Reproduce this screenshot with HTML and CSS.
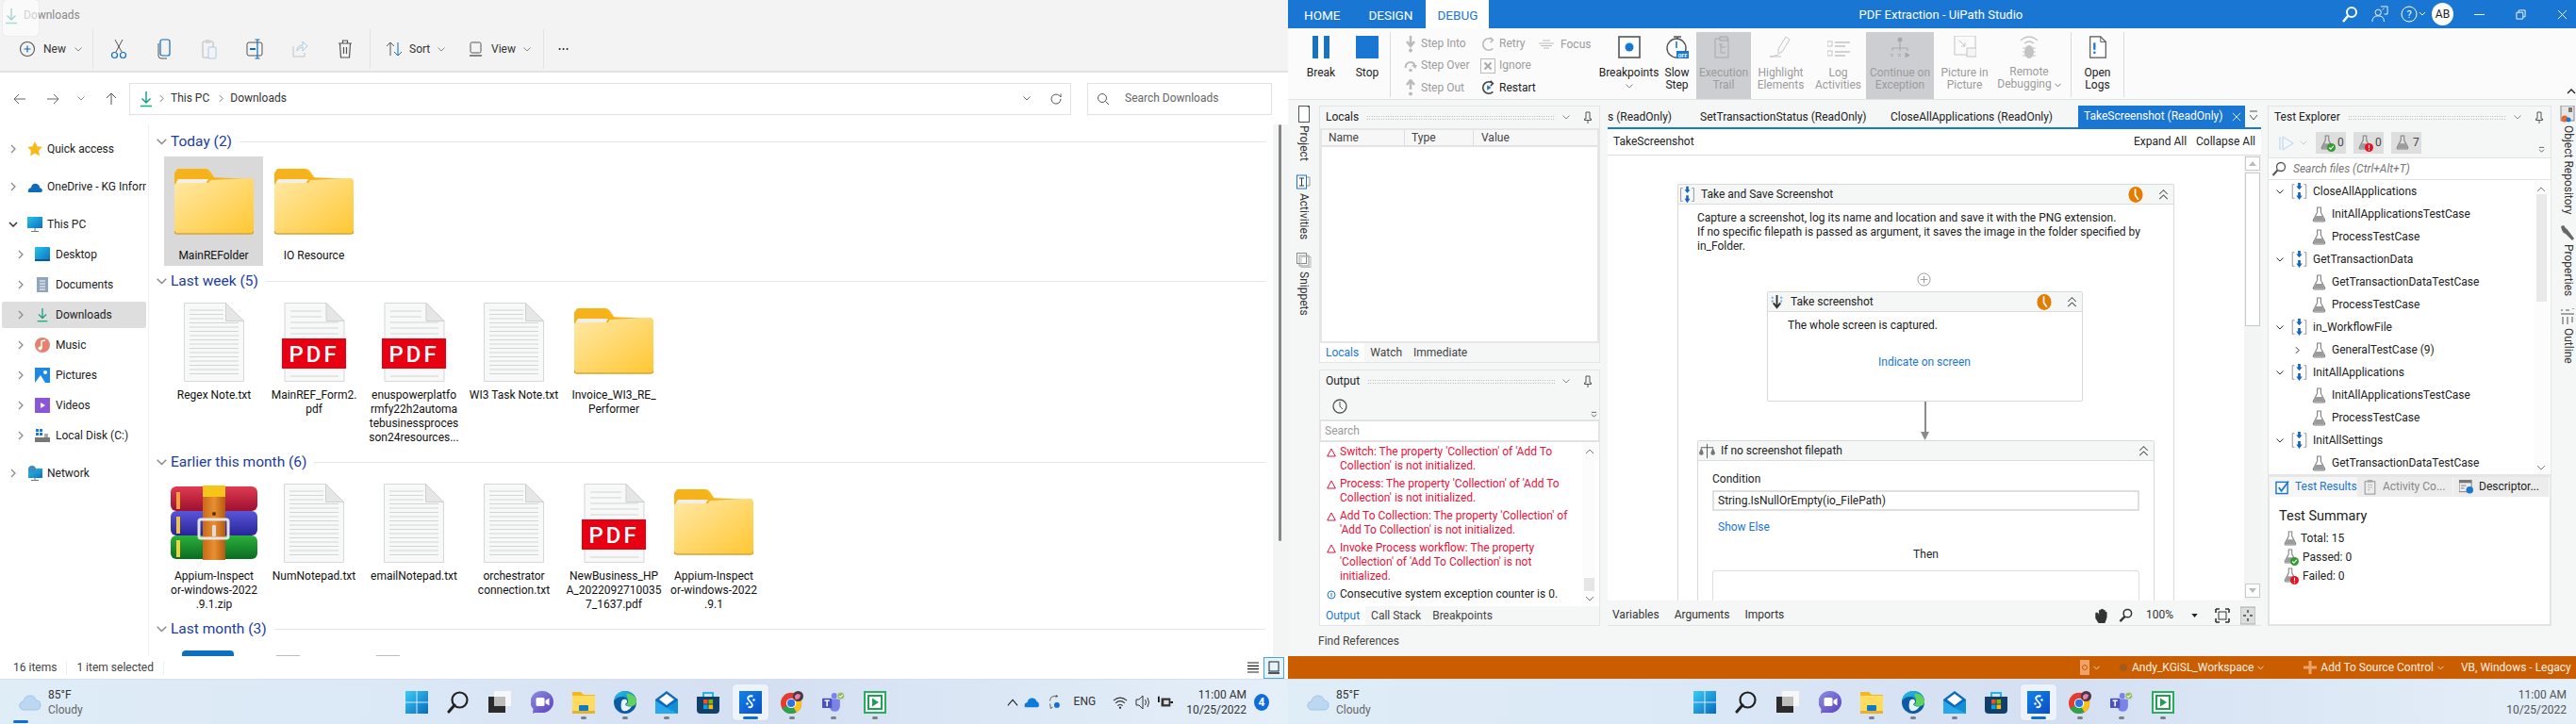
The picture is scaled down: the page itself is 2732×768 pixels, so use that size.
FILE: index.html
```
<!DOCTYPE html>
<html lang="en">
<head>
<meta charset="utf-8">
<title>Downloads and UiPath Studio</title>
<link rel="stylesheet" href="styles.css">
</head>
<body>
<svg class="defs" aria-hidden="true">
<defs>
<linearGradient id="gf" x1="0" y1="0" x2="1" y2="1"><stop offset="0" stop-color="#ffe9a8"/><stop offset="1" stop-color="#ffc733"/></linearGradient>
<linearGradient id="gs" x1="0" y1="0" x2="1" y2="1"><stop offset="0" stop-color="#3ccdf5"/><stop offset="1" stop-color="#0669bc"/></linearGradient>
<linearGradient id="gd" x1="0" y1="0" x2="1" y2="1"><stop offset="0" stop-color="#28c4e8"/><stop offset="1" stop-color="#0a6fc0"/></linearGradient>
<linearGradient id="gu" x1="0" y1="0" x2="1" y2="1"><stop offset="0" stop-color="#1184ea"/><stop offset="1" stop-color="#0a4fc4"/></linearGradient>
<linearGradient id="gc" x1="0" y1="0" x2="1" y2="1"><stop offset="0" stop-color="#8b8fe0"/><stop offset="1" stop-color="#5b3fc0"/></linearGradient>
<linearGradient id="gb" x1="0" y1="0" x2="0" y2="1"><stop offset="0" stop-color="#e23b52"/><stop offset="1" stop-color="#9c1030"/></linearGradient>
<linearGradient id="gv" x1="0" y1="0" x2="0" y2="1"><stop offset="0" stop-color="#5a56d8"/><stop offset="1" stop-color="#27249a"/></linearGradient>
<linearGradient id="gg" x1="0" y1="0" x2="0" y2="1"><stop offset="0" stop-color="#2cb03c"/><stop offset="1" stop-color="#0a6c22"/></linearGradient>
<linearGradient id="go" x1="0" y1="0" x2="1" y2="0"><stop offset="0" stop-color="#c9681a"/><stop offset=".5" stop-color="#e89030"/><stop offset="1" stop-color="#b45a12"/></linearGradient>
</defs>
<symbol id="r-pause" viewBox="0 0 24 24"><rect x="3" width="6" height="24" fill="#1a73bd"/><rect x="15" width="6" height="24" fill="#1a73bd"/></symbol>
<symbol id="dl" viewBox="0 0 14 18"><path d="M7 1v12M2.500 8.500 7 13l4.500-4.500" fill="none" stroke="#1f9e8a" stroke-width="1.500"/><path d="M1 16.500h12" stroke="#18b87c" stroke-width="1.600"/></symbol>
<symbol id="folder" viewBox="0 0 84 84"><path d="M2 8q0-2 2-2h29q3 0 5 3l6 9h-42z" fill="#fbb614"/><path d="M0 12q0-4 4-5h28l5 8 45 2v54q0 3-3 3H4q-4 0-4-3z" fill="#f6b21a"/><path d="M2 20l2-3h32l-3 5H2z" fill="#f3efe6"/><path d="M36 21l2-3 42-2q4 0 4 4v52q0 3-3 3H3q-3 0-3-3V24q0-3 3-3z" fill="url(#gf)"/><path d="M0 72q0 3 3 3h78q3 0 3-3" fill="none" stroke="#d9a23a" stroke-width="1.500"/></symbol>
<symbol id="txt" viewBox="0 0 64 84"><path d="M.5.500h44l19 19v64H.5z" fill="#f7f8f8" stroke="#d7d7d7"/><path d="M44.500.500v19h19z" fill="#e6e6e6" stroke="#d0d0d0"/><path d="M6 8h36M6 12.500h36M6 17h36M6 21.500h52M6 26h52M6 30.500h52M6 35h52M6 39.500h52M6 44h52M6 48.500h52M6 53h52M6 57.500h52M6 62h52M6 66.500h52M6 71h52M6 75.500h52" stroke="#d4d4d4"/></symbol>
<symbol id="pdf" viewBox="0 0 68 84"><path d="M3 .500h44l19 19v64H3z" fill="#f7f8f8" stroke="#d7d7d7"/><path d="M47 .500v19h19z" fill="#e6e6e6" stroke="#d0d0d0"/><path d="M9 9h33M9 15h33M9 21h51M9 27h51M9 33h51M9 78h51" stroke="#d4d4d4"/><rect y="38" width="68" height="32" fill="#e60012"/></symbol>
<symbol id="zip" viewBox="0 0 92 80"><rect y="1" width="92" height="26" rx="6" fill="url(#gb)"/><rect y="27" width="92" height="26" rx="6" fill="url(#gv)"/><rect y="53" width="92" height="25" rx="6" fill="url(#gg)"/><rect x="6" y="7" width="4" height="18" fill="#f2a33a"/><rect x="6" y="33" width="4" height="18" fill="#f2c33a"/><rect x="6" y="58" width="4" height="18" fill="#f2d23a"/><rect x="34" y="0" width="24" height="79" fill="url(#go)"/><rect x="34" y="0" width="24" height="12" fill="#f5c51a"/><rect x="30" y="36" width="31" height="20" rx="2" fill="none" stroke="#e4e4e4" stroke-width="3"/><rect x="44" y="42" width="4" height="12" rx="1" fill="#ddd"/><circle cx="46" cy="30" r="2" fill="#5b3210"/></symbol>
<symbol id="flask" viewBox="0 0 16 18"><path d="M5.500 1h5M6 1v5.500L1.500 15q-.5 2 1.500 2h10q2 0 1.500-2L10 6.500V1" fill="none" stroke="#808080" stroke-width="1.200"/><path d="M4.500 10.500h7l3 6H1.500z" fill="#9b9b9b"/></symbol>
<symbol id="flow" viewBox="0 0 18 22"><path d="M3.500 3H1v16h2.500M14.500 3H17v16h-2.500" fill="none" stroke="#8a8a8a"/><path d="M7.500 1h3v4h2L9 9 5.500 5h2zM7.500 12h3v4h2L9 21l-3.500-5h2z" fill="#1565c0"/></symbol>
<symbol id="chev" viewBox="0 0 8 5"><path d="M.5.500 4 4 7.500.500" fill="none" stroke="currentColor"/></symbol>
<symbol id="chevr" viewBox="0 0 6 10"><path d="M1 1l4 4-4 4" fill="none" stroke="currentColor" stroke-width="1.200"/></symbol>
<symbol id="pin" viewBox="0 0 10 14"><path d="M3 1h4v7h1.500v1.500h-7V8H3zM5 9.500V13" fill="none" stroke="#555"/></symbol>
<symbol id="clockb" viewBox="0 0 16 18"><ellipse cx="8" cy="9" rx="8" ry="9" fill="#e57c00"/><path d="M7.500 2.500v7l3.500 5" fill="none" stroke="#fff" stroke-width="1.800"/></symbol>
<symbol id="coll" viewBox="0 0 12 14"><path d="M1 7l5-5 5 5M1 13l5-5 5 5" fill="none" stroke="#555" stroke-width="1.200"/></symbol>
<symbol id="warn" viewBox="0 0 10 10"><path d="M5 1 9.300 9H.7z" fill="none" stroke="#e8113a"/></symbol>
<symbol id="ok" viewBox="0 0 8 8"><circle cx="4" cy="4" r="4" fill="#2f9e2f"/><path d="M2 4l1.500 1.500L6 2.500" fill="none" stroke="#fff"/></symbol>
<symbol id="err" viewBox="0 0 8 8"><circle cx="4" cy="4" r="4" fill="#e81123"/><path d="M4 1.500v3.200M4 5.500v1.200" stroke="#fff"/></symbol>
<symbol id="t-start" viewBox="0 0 24 24"><path d="M0 0h11.500v11.500H0zM12.500 0H24v11.500H12.500zM0 12.500h11.500V24H0zM12.500 12.500H24V24H12.500z" fill="url(#gs)"/></symbol>
<symbol id="t-search" viewBox="0 0 24 24"><circle cx="13.500" cy="9.500" r="8" fill="none" stroke="#222" stroke-width="2.200"/><path d="M8 15 2 22" stroke="#222" stroke-width="3" stroke-linecap="round"/></symbol>
<symbol id="t-task" viewBox="0 0 24 24"><rect x="0" y="6" width="18" height="17" fill="#2b2b2b"/><rect x="6" y="0" width="18" height="16" fill="#f7f7f7"/><rect x="6" y="6" width="12" height="10" fill="#bdbdbd"/></symbol>
<symbol id="t-chat" viewBox="0 0 24 24"><path d="M12 0a12 11.500 0 0 1 0 23H4l-2 1 .5-5A12 11.500 0 0 1 12 0z" fill="url(#gc)"/><rect x="5.500" y="7" width="9" height="9" rx="1.500" fill="#fff"/><path d="M15.500 10l4-2.500v8l-4-2.500z" fill="#fff"/></symbol>
<symbol id="t-files" viewBox="0 0 24 24"><path d="M0 1h9l3 3h12v20H0z" fill="#f5b81c"/><path d="M0 5h24v19H0z" fill="#ffdc5e"/><rect x="7" y="15" width="10" height="6" rx="1" fill="#0f7bc4"/><rect y="21" width="24" height="3" fill="#e8b030"/></symbol>
<symbol id="t-edge" viewBox="0 0 24 24"><circle cx="12" cy="12" r="12" fill="#0c59a4"/><path d="M0 11C1 3 7 0 12 0c7 0 12 5 12 11 0 3-2 5-6 5-3 0-5-1-5-2 1 0 2-1 2-3 0-3-3-5-6-5-5 0-8 3-9 5z" fill="url(#gd)"/><path d="M13 3c6-1 11 3 11 8 0 3-2 5-6 5-3 0-5-1-5-2 1 0 2-1 2-3 0-3-1-6-2-8z" fill="#5fd35b"/><path d="M8 12c0-3 3-4 5-3 2 2 1 4-1 5 1 2 4 3 7 2-2 4-6 6-9 5-2-1-3-4-2-9z" fill="#eaf3fb"/></symbol>
<symbol id="t-mail" viewBox="0 0 24 24"><path d="M0 9 12 0l12 9v15H0z" fill="#0d6ab8"/><path d="M4 9 12 3l8 6-8 6z" fill="#fff"/><path d="M0 10l12 8 12-8v14H0z" fill="#28a8ea"/><path d="M12 18l12-8v14z" fill="#0f8fd8"/></symbol>
<symbol id="t-store" viewBox="0 0 24 24"><path d="M7 6V2h10v4" fill="none" stroke="#20b6e8" stroke-width="2"/><path d="M0 6h24v14q0 4-4 4H4q-4 0-4-4z" fill="#103f6c"/><rect x="7" y="9" width="4.600" height="4.600" fill="#f25022"/><rect x="12.500" y="9" width="4.600" height="4.600" fill="#7fba00"/><rect x="7" y="14.500" width="4.600" height="4.600" fill="#00a4ef"/><rect x="12.500" y="14.500" width="4.600" height="4.600" fill="#ffb900"/></symbol>
<symbol id="t-ui" viewBox="0 0 24 24"><rect width="24" height="24" fill="url(#gu)"/><path d="M14.500 5.500C10 4.500 8 7 10 9.500l3 3.500c2 2.500 0 5-3.500 4" fill="none" stroke="#fff" stroke-width="1.800"/><circle cx="15.500" cy="9.500" r="1.200" fill="#fff"/><circle cx="8.500" cy="13.500" r="1.200" fill="#fff"/></symbol>
<symbol id="t-chrome" viewBox="0 0 26 26"><circle cx="12" cy="14" r="12" fill="#e23d2e"/><path d="M12 14 1.600 20A12 12 0 0 0 12 26c2 0 4-.5 6-1.600z" fill="#2ba24c"/><path d="M12 14 22.400 8A12 12 0 0 1 18 24.400z" fill="#fbc116"/><circle cx="12" cy="14" r="5.600" fill="#fff"/><circle cx="12" cy="14" r="4.400" fill="#2f72e6"/><circle cx="20" cy="6" r="6" fill="#4b3646"/><path d="M16 6q3-5 7-1l-2 4-4 1z" fill="#e882a8"/></symbol>
<symbol id="t-teams" viewBox="0 0 28 26"><circle cx="15" cy="5" r="3.600" fill="#7b83eb"/><path d="M9 9h13v9a6 6 0 0 1-13 0z" fill="#7b83eb"/><rect x="0" y="8" width="12" height="12" rx="1" fill="#4b53bc"/><path d="M3 11h6M6 11v7" stroke="#fff" stroke-width="1.800"/><circle cx="23" cy="5" r="4.500" fill="#8fbc5a" stroke="#ddd"/><path d="M20.800 5l1.700 1.700 2.800-3" fill="none" stroke="#fff" stroke-width="1.200"/></symbol>
<symbol id="t-green" viewBox="0 0 24 24"><rect x="1" y="1" width="22" height="22" fill="#fff" stroke="#25b05c" stroke-width="2"/><rect x="4" y="4" width="16" height="16" fill="#1f9f55"/><rect x="6" y="6" width="12" height="12" fill="#fff"/><path d="M9 7.500 16 12l-7 4.500z" fill="#1f9f55"/></symbol>
</svg>

<section class="screen">
<div class="explorer">
  <div class="ex-title"><svg class="ic14"><use href="#dl"/></svg><span>Downloads</span></div>
  <div class="ex-tools">
    <div class="tool tool-new"><svg class="ic18" viewBox="0 0 18 18"><circle cx="9" cy="9" r="7.500" fill="none" stroke="#555" stroke-width="1.100"/><path d="M9 5.500v7M5.500 9h7" stroke="#0f6cbd" stroke-width="1.200"/></svg><span>New</span><svg class="ch8"><use href="#chev"/></svg></div>
    <i class="tsep s-a"></i>
    <div class="tool"><svg class="ic18" viewBox="0 0 18 22"><path d="M5 1l7 13M13 1 6 14" stroke="#555" fill="none"/><circle cx="4.500" cy="17.500" r="3" fill="none" stroke="#0f6cbd" stroke-width="1.200"/><circle cx="13.500" cy="17.500" r="3" fill="none" stroke="#0f6cbd" stroke-width="1.200"/></svg></div>
    <div class="tool"><svg class="ic18" viewBox="0 0 18 22"><rect x="5" y="1" width="10" height="17" rx="2" fill="none" stroke="#0f6cbd" stroke-width="1.200"/><path d="M3 5v13q0 3 3 3h6" fill="none" stroke="#555"/></svg></div>
    <div class="tool dim"><svg class="ic18" viewBox="0 0 18 22"><rect x="2" y="3" width="11" height="17" rx="1" fill="none" stroke="#b8b8b8"/><rect x="5" y="1" width="5" height="4" fill="#d5d5d5"/><rect x="8" y="9" width="8" height="12" rx="1" fill="#f3f3f3" stroke="#a9cbe6"/></svg></div>
    <div class="tool"><svg class="ic18" viewBox="0 0 18 22"><rect x="1" y="4" width="16" height="14" rx="2" fill="none" stroke="#555"/><path d="M12 1v20M9.500 1h5M9.500 21h5" stroke="#0f6cbd" stroke-width="1.200" fill="none"/><path d="M4 11h6" stroke="#0f6cbd" stroke-width="2"/></svg></div>
    <div class="tool dim"><svg class="ic18" viewBox="0 0 18 22"><path d="M2 8v11h12v-4" fill="none" stroke="#c4c4c4"/><path d="M6 13q0-6 6-6V3l5 5-5 5V9q-4 0-6 4z" fill="none" stroke="#a9cbe6"/></svg></div>
    <div class="tool"><svg class="ic18" viewBox="0 0 18 22"><path d="M2 5h14M6.500 5V2h5v3M3.500 5l1 15h9l1-15M7.500 9v7M10.500 9v7" fill="none" stroke="#555" stroke-width="1.200"/></svg></div>
    <i class="tsep s-b"></i>
    <div class="tool tool-txt"><svg class="ic18" viewBox="0 0 18 18"><path d="M5 16V2M1 6l4-4 4 4" fill="none" stroke="#555"/><path d="M13 2v14M9 12l4 4 4-4" fill="none" stroke="#0f6cbd"/></svg><span>Sort</span><svg class="ch8"><use href="#chev"/></svg></div>
    <div class="tool tool-view"><svg class="ic18" viewBox="0 0 18 18"><rect x="3" y="2" width="11" height="11" rx="1.500" fill="none" stroke="#555"/><path d="M2 16h13" stroke="#555" stroke-width="1.400"/></svg><span>View</span><svg class="ch8"><use href="#chev"/></svg></div>
    <i class="tsep"></i>
    <div class="tool-dots">•••</div>
  </div>
  <div class="ex-addr">
    <div class="navs">
      <svg class="ic14" viewBox="0 0 14 14"><path d="M13 7H1M6 2 1 7l5 5" fill="none" stroke="#666"/></svg>
      <svg class="ic14" viewBox="0 0 14 14"><path d="M1 7h12M8 2l5 5-5 5" fill="none" stroke="#666"/></svg>
      <svg class="ch8"><use href="#chev"/></svg>
      <svg class="ic14" viewBox="0 0 14 14"><path d="M7 13V1M2 6l5-5 5 5" fill="none" stroke="#555"/></svg>
    </div>
    <div class="crumbs"><svg class="ic14"><use href="#dl"/></svg><svg class="cr"><use href="#chevr"/></svg><span>This PC</span><svg class="cr"><use href="#chevr"/></svg><span>Downloads</span>
      <svg class="cr-ch"><use href="#chev"/></svg><svg class="cr-re" viewBox="0 0 14 14"><path d="M12 7a5 5 0 1 1-1.500-3.500L12 5V1.500" fill="none" stroke="#555"/></svg></div>
    <div class="exsearch"><svg class="ic14" viewBox="0 0 14 14"><circle cx="6" cy="6" r="4.500" fill="none" stroke="#555"/><path d="M9.500 9.500 13 13" stroke="#555"/></svg><span>Search Downloads</span></div>
  </div>
  <div class="ex-main">
    <nav class="nav">
      <div class="nrow"><svg class="nch"><use href="#chevr"/></svg><svg class="nic" viewBox="0 0 16 16"><path d="M8 0l2.400 5.300 5.600.6-4.200 3.800 1.200 5.800L8 12.600l-5 2.900 1.200-5.800L0 5.900l5.600-.6z" fill="#fdb813"/></svg><span>Quick access</span></div>
      <div class="nrow gap"><svg class="nch"><use href="#chevr"/></svg><svg class="nic" viewBox="0 0 16 16"><path d="M1 14q-1-4 3-5 1-5 6-4 3 1 3 4 3 1 3 3t-2 2z" fill="#0f6cbd"/></svg><span class="clip">OneDrive - KG Inform</span></div>
      <div class="nrow gap"><svg class="nch down" viewBox="0 0 10 6"><path d="M1 1l4 4 4-4" fill="none" stroke="#333" stroke-width="1.500"/></svg><svg class="nic" viewBox="0 0 16 16"><rect width="16" height="12" fill="url(#gd)"/><path d="M8 12v3M4 15.500h8" stroke="#777"/></svg><span>This PC</span></div>
      <div class="nrow sub"><svg class="nch"><use href="#chevr"/></svg><svg class="nic" viewBox="0 0 16 16"><rect width="16" height="15" rx="1" fill="url(#gd)"/><rect y="13" width="16" height="2" fill="#085a9c"/></svg><span>Desktop</span></div>
      <div class="nrow sub"><svg class="nch"><use href="#chevr"/></svg><svg class="nic" viewBox="0 0 16 16"><rect x="2" width="12" height="16" fill="#8fa5be"/><path d="M5 4h6M5 7h6M5 10h6M5 13h6" stroke="#fff"/></svg><span>Documents</span></div>
      <div class="nrow sub cur"><svg class="nch"><use href="#chevr"/></svg><svg class="nic"><use href="#dl"/></svg><span>Downloads</span></div>
      <div class="nrow sub"><svg class="nch"><use href="#chevr"/></svg><svg class="nic" viewBox="0 0 16 16"><circle cx="8" cy="8" r="8" fill="#e5826f"/><path d="M7 11V4l4-1" fill="none" stroke="#fff" stroke-width="1.500"/><circle cx="5.500" cy="11.500" r="2" fill="#fff"/></svg><span>Music</span></div>
      <div class="nrow sub"><svg class="nch"><use href="#chevr"/></svg><svg class="nic" viewBox="0 0 16 16"><rect width="16" height="16" fill="#1e88e5"/><path d="M0 16 6 8l5 8z" fill="#fff"/><circle cx="11" cy="5" r="2" fill="#fff"/></svg><span>Pictures</span></div>
      <div class="nrow sub"><svg class="nch"><use href="#chevr"/></svg><svg class="nic" viewBox="0 0 16 16"><rect width="16" height="16" fill="#8a55d6"/><path d="M6 5l5 3-5 3z" fill="#fff"/></svg><span>Videos</span></div>
      <div class="nrow sub"><svg class="nch"><use href="#chevr"/></svg><svg class="nic" viewBox="0 0 16 16"><path d="M1 1h3v3H1zM5 1h3v3H5zM1 5h3v3H1zM5 5h3v3H5z" fill="#1e78d8"/><rect y="10" width="16" height="5" fill="#777"/><path d="M10 6h4v4h-4z" fill="#aaa"/></svg><span>Local Disk (C:)</span></div>
      <div class="nrow gap"><svg class="nch"><use href="#chevr"/></svg><svg class="nic" viewBox="0 0 16 16"><rect x="1" y="3" width="15" height="10" fill="url(#gd)"/><circle cx="5" cy="4" r="4" fill="#3a8fc0"/><path d="M8 13v3M4 15.500h8" stroke="#777"/></svg><span>Network</span></div>
    </nav>
    <main class="files">
      <div class="group first">
        <h2 class="ghead"><svg class="gch"><use href="#chev"/></svg><span>Today (2)</span><i></i></h2>
        <div class="tiles">
          <div class="tile sel"><svg class="ticon"><use href="#folder"/></svg><p>MainREFolder</p></div>
          <div class="tile"><svg class="ticon"><use href="#folder"/></svg><p>IO Resource</p></div>
        </div>
      </div>
      <div class="group">
        <h2 class="ghead"><svg class="gch"><use href="#chev"/></svg><span>Last week (5)</span><i></i></h2>
        <div class="tiles">
          <div class="tile"><svg class="ticon"><use href="#txt"/></svg><p>Regex Note.txt</p></div>
          <div class="tile"><svg class="ticon" viewBox="0 0 68 84"><use href="#pdf"/><text x="34" y="63" text-anchor="middle" class="pdft">PDF</text></svg><p>MainREF_Form2.<br>pdf</p></div>
          <div class="tile"><svg class="ticon" viewBox="0 0 68 84"><use href="#pdf"/><text x="34" y="63" text-anchor="middle" class="pdft">PDF</text></svg><p>enuspowerplatfo<br>rmfy22h2automa<br>tebusinessproces<br>son24resources...</p></div>
          <div class="tile"><svg class="ticon"><use href="#txt"/></svg><p>WI3 Task Note.txt</p></div>
          <div class="tile"><svg class="ticon"><use href="#folder"/></svg><p>Invoice_WI3_RE_<br>Performer</p></div>
        </div>
      </div>
      <div class="group">
        <h2 class="ghead"><svg class="gch"><use href="#chev"/></svg><span>Earlier this month (6)</span><i></i></h2>
        <div class="tiles">
          <div class="tile"><svg class="ticon wide"><use href="#zip"/></svg><p>Appium-Inspect<br>or-windows-2022<br>.9.1.zip</p></div>
          <div class="tile"><svg class="ticon"><use href="#txt"/></svg><p>NumNotepad.txt</p></div>
          <div class="tile"><svg class="ticon"><use href="#txt"/></svg><p>emailNotepad.txt</p></div>
          <div class="tile"><svg class="ticon"><use href="#txt"/></svg><p>orchestrator<br>connection.txt</p></div>
          <div class="tile"><svg class="ticon" viewBox="0 0 68 84"><use href="#pdf"/><text x="34" y="63" text-anchor="middle" class="pdft">PDF</text></svg><p>NewBusiness_HP<br>A_2022092710035<br>7_1637.pdf</p></div>
          <div class="tile"><svg class="ticon"><use href="#folder"/></svg><p>Appium-Inspect<br>or-windows-2022<br>.9.1</p></div>
        </div>
      </div>
      <div class="group">
        <h2 class="ghead"><svg class="gch"><use href="#chev"/></svg><span>Last month (3)</span><i></i></h2>
        <div class="peek"><b class="pk-blue"></b><b class="pk-line"></b><b class="pk-line"></b></div>
      </div>
    </main>
    <div class="ex-scroll"><i></i></div>
  </div>
  <div class="ex-status"><span>16 items</span><i></i><span>1 item selected</span><i></i>
    <div class="viewbtns"><svg class="vb" viewBox="0 0 14 14"><path d="M1 2h12M1 5.300h12M1 8.700h12M1 12h12" stroke="#222" stroke-width="1.200"/></svg><span class="vb-on"><svg class="vb" viewBox="0 0 14 14"><rect x="2" y="1" width="10" height="10" fill="none" stroke="#222"/><path d="M1 13h12" stroke="#222" stroke-width="1.500"/></svg></span></div>
  </div>
</div>
<footer class="taskbar">
  <div class="weather"><svg class="wcloud" viewBox="0 0 24 18"><path d="M5 17q-5-1-4-6 1-3 4-3 1-6 7-6 5 0 6 5 5 0 5 5t-5 5z" fill="#bcd7f2" stroke="#a3c4ea"/></svg><div><div>85°F</div><div class="wsub">Cloudy</div></div></div>
  <div class="apps">
    <span class="app"><svg class="ai"><use href="#t-start"/></svg></span>
    <span class="app"><svg class="ai"><use href="#t-search"/></svg></span>
    <span class="app"><svg class="ai"><use href="#t-task"/></svg></span>
    <span class="app"><svg class="ai"><use href="#t-chat"/></svg></span>
    <span class="app run"><svg class="ai"><use href="#t-files"/></svg></span>
    <span class="app run"><svg class="ai"><use href="#t-edge"/></svg></span>
    <span class="app run"><svg class="ai"><use href="#t-mail"/></svg></span>
    <span class="app"><svg class="ai"><use href="#t-store"/></svg></span>
    <span class="app active"><svg class="ai"><use href="#t-ui"/></svg></span>
    <span class="app run"><svg class="ai"><use href="#t-chrome"/></svg></span>
    <span class="app run"><svg class="ai"><use href="#t-teams"/></svg></span>
    <span class="app run"><svg class="ai"><use href="#t-green"/></svg></span>
  </div>
  <div class="tray">
    <svg class="tr tr-up" viewBox="0 0 14 10"><path d="M1 9l6-7 6 7" fill="none" stroke="#222" stroke-width="1.300"/></svg>
    <svg class="tr" viewBox="0 0 18 14"><path d="M1 13q-1.500-5 3-6 1-5 6-5 4 0 5 4 3 1 3 4t-3 3z" fill="#0f7bd8"/></svg>
    <svg class="tr" viewBox="0 0 18 22"><path d="M3 9Q3 2 10 2h4M11 0l3 2-3 2M3 13l1 7 3-2" fill="none" stroke="#333"/><circle cx="13" cy="15" r="4" fill="#0f6cd8"/></svg>
    <span class="eng">ENG</span>
    <svg class="tr" viewBox="0 0 18 16"><path d="M1 6q8-7 16 0M3.500 9q5.500-5 11 0M6 12q3-2.500 6 0" fill="none" stroke="#333" stroke-width="1.200"/><circle cx="9" cy="14.500" r="1.300" fill="#333"/></svg>
    <svg class="tr" viewBox="0 0 16 16"><path d="M1 5h3l4-4v14l-4-4H1z" fill="none" stroke="#333"/><path d="M10.500 5q2 3 0 6M13 3q3 5 0 10" fill="none" stroke="#333"/></svg>
    <svg class="tr" viewBox="0 0 18 16"><rect x="4" y="3" width="11" height="10" fill="#333"/><rect x="7" y="5.500" width="6" height="5" fill="#ddd"/><path d="M1 1v7M15 8h3" stroke="#111" stroke-width="2"/></svg>
    <div class="clock"><div>11:00 AM</div><div>10/25/2022</div></div>
    <span class="badge">4</span>
  </div>
</footer>
</section>

<section class="screen">
<div class="studio">
  <header class="st-title">
    <span class="st-tab">HOME</span><span class="st-tab">DESIGN</span><span class="st-tab on">DEBUG</span>
    <span class="st-name">PDF Extraction - UiPath Studio</span>
    <div class="st-ctl">
      <svg class="c-s" viewBox="0 0 18 18"><circle cx="11" cy="7" r="5" fill="none" stroke="#fff" stroke-width="2"/><path d="M7 11l-5 6" stroke="#fff" stroke-width="2.500"/></svg>
      <svg class="c-f" viewBox="0 0 20 20"><circle cx="8" cy="8" r="3.500" fill="none" stroke="#fff"/><path d="M1 19q0-7 7-7t7 7M11 1h8v9h-4M13 5l2-2" fill="none" stroke="#fff"/></svg>
      <svg class="c-h" viewBox="0 0 26 18"><circle cx="9" cy="9" r="8" fill="none" stroke="#fff"/><text x="9" y="13" text-anchor="middle" class="hq">?</text><path d="M20 7l3 3 3-3" fill="none" stroke="#fff"/></svg>
      <span class="avatar">AB</span>
      <svg class="c-m" viewBox="0 0 12 12"><path d="M0 6h12" stroke="#fff"/></svg>
      <svg class="c-r" viewBox="0 0 12 12"><path d="M1 3.500h7.500V11H1zM3.500 3.500V1H11v7.500H8.500" fill="none" stroke="#fff"/></svg>
      <svg class="c-x" viewBox="0 0 12 12"><path d="M1 1l10 10M11 1 1 11" stroke="#fff"/></svg>
    </div>
  </header>
  <div class="ribbon">
    <div class="rb w50"><svg class="ri"><use href="#r-pause"/></svg><span>Break</span></div>
    <div class="rb w48"><svg class="ri" viewBox="0 0 24 24"><rect width="24" height="24" fill="#1976d2"/></svg><span>Stop</span></div>
    <i class="rsep"></i>
    <div class="rcol w95">
      <div class="rs off"><svg class="rsi" viewBox="0 0 14 18"><path d="M7 0v9M3 6l4 5 4-5" fill="none" stroke="#bbb" stroke-width="2.500"/><circle cx="7" cy="15.500" r="2" fill="#bbb"/></svg><span>Step Into</span></div>
      <div class="rs off"><svg class="rsi" viewBox="0 0 14 14"><path d="M1.500 9Q2 3 7 3q3 0 4.500 3" fill="none" stroke="#bbb" stroke-width="2"/><path d="M8 6h6l-2 4z" fill="#bbb"/><circle cx="7" cy="11.500" r="1.800" fill="#bbb"/></svg><span>Step Over</span></div>
      <div class="rs off"><svg class="rsi" viewBox="0 0 14 18"><path d="M7 11V2M3 6l4-5 4 5" fill="none" stroke="#bbb" stroke-width="2.500"/><circle cx="7" cy="15.500" r="2" fill="#bbb"/></svg><span>Step Out</span></div>
    </div>
    <div class="rcol w58">
      <div class="rs2 off"><svg class="rsi2" viewBox="0 0 16 18"><path d="M14 4a7 7 0 1 0 0 10M11 1l3 3-3 3" fill="none" stroke="#bbb" stroke-width="1.800"/></svg><span>Retry</span></div>
      <div class="rs2 off"><svg class="rsi2" viewBox="0 0 16 16"><rect x=".5" y=".5" width="15" height="15" fill="none" stroke="#bbb"/><path d="M4.500 4.500l7 7M11.500 4.500l-7 7" stroke="#aaa" stroke-width="2"/></svg><span>Ignore</span></div>
      <div class="rs2"><svg class="rsi2" viewBox="0 0 16 18"><path d="M14 4a7 7 0 1 0 0 10M11 1l3 3-3 3" fill="none" stroke="#444" stroke-width="1.800"/><path d="M7 6l5 3-5 3z" fill="#1976d2"/></svg><span>Restart</span></div>
    </div>
    <div class="rcol w69">
      <div class="rs3 off"><svg class="rsi3" viewBox="0 0 16 10"><path d="M4 1h8M0 4h16M2 6.500h12M5 9h6" stroke="#bbb"/></svg><span>Focus</span></div>
    </div>
    <div class="rb w61"><svg class="ri" viewBox="0 0 24 24"><rect x="1" y="1" width="22" height="22" fill="#fff" stroke="#555" stroke-width="1.600"/><circle cx="12" cy="12" r="4.500" fill="#1976d2"/></svg><span>Breakpoints<br><svg class="ch8 dk"><use href="#chev"/></svg></span></div>
    <div class="rb w41"><svg class="ri" viewBox="0 0 24 24"><path d="M8 1h8M12 1v3" stroke="#555" stroke-width="1.500"/><circle cx="11" cy="13" r="10" fill="none" stroke="#555" stroke-width="1.400"/><path d="M11 6v7" stroke="#1976d2" stroke-width="1.600"/><rect x="11" y="16" width="13" height="8" fill="#1976d2"/><text x="17.500" y="22.500" text-anchor="middle" class="offt">OFF</text></svg><span>Slow<br>Step</span></div>
    <div class="rb w58 off hl"><svg class="ri" viewBox="0 0 24 24"><path d="M7 3h10v20H3V3z" fill="none" stroke="#a8a8a8"/><rect x="8" y="1" width="8" height="4" fill="#c8c8c8" stroke="#a8a8a8"/><path d="M9 9v9h5M9 12h5M7 9h4" stroke="#a8a8a8" fill="none"/></svg><span>Execution<br>Trail</span></div>
    <div class="rb w63 off"><svg class="ri" viewBox="0 0 24 24"><path d="M9 14 17 1l4 3-8 13-4 2zM9 20l-7 2H0" fill="none" stroke="#c4c4c4"/><path d="M0 22h12" stroke="#c4c4c4"/></svg><span>Highlight<br>Elements</span></div>
    <div class="rb w59 off"><svg class="ri" viewBox="0 0 24 24"><path d="M8 7h16M8 11h11M8 17h16M8 21h11" stroke="#c4c4c4" stroke-width="1.500"/><rect x="0" y="6" width="5" height="5" fill="none" stroke="#c4c4c4"/><rect x="0" y="16" width="5" height="5" fill="none" stroke="#c4c4c4"/></svg><span>Log<br>Activities</span></div>
    <div class="rb w72 off hl"><svg class="ri" viewBox="0 0 24 24"><circle cx="12" cy="4" r="2.500" fill="#a8a8a8"/><path d="M12 6v7M4 16v-3h16v3M12 13v3" fill="none" stroke="#a8a8a8"/><path d="M2 19l3 3M5 19l-3 3M10 19l3 3M13 19l-3 3M18 18l4 2.500-4 2.500z" stroke="#a8a8a8" fill="#a8a8a8"/></svg><span>Continue on<br>Exception</span></div>
    <div class="rb w65 off"><svg class="ri" viewBox="0 0 24 24"><rect x="1" y="0" width="22" height="20" fill="none" stroke="#c4c4c4"/><rect x="14" y="13" width="10" height="9" fill="#f5f5f5" stroke="#c4c4c4"/><path d="M6 5l6 6M12 7v4H8" fill="none" stroke="#c4c4c4"/></svg><span>Picture in<br>Picture</span></div>
    <div class="rb w72 off"><svg class="ri" viewBox="0 0 24 24"><path d="M3 5q9-8 18 0M7 8q5-4 10 0" fill="none" stroke="#c4c4c4" stroke-width="1.500"/><ellipse cx="12" cy="17" rx="5" ry="7" fill="#c4c4c4"/><path d="M5 13h14M5 17h14M5 21h14" stroke="#c4c4c4"/></svg><span class="up1">Remote<br>Debugging <svg class="ch6"><use href="#chev"/></svg></span></div>
    <i class="rsep m8"></i>
    <div class="rb w55"><svg class="ri" viewBox="0 0 24 26"><path d="M3 1h12l6 6v18H3z" fill="#fff" stroke="#555" stroke-width="1.300"/><path d="M15 1v6h6" fill="none" stroke="#555"/><path d="M8 8v8" stroke="#1976d2" stroke-width="2.500"/><rect x="6.800" y="18" width="2.500" height="2.500" fill="#1976d2"/></svg><span>Open<br>Logs</span></div>
    <i class="rsep"></i>
    <svg class="rcollapse" viewBox="0 0 10 6"><path d="M1 5l4-4 4 4" fill="none" stroke="#222" stroke-width="1.400"/></svg>
  </div>
  <div class="st-body">
    <aside class="rail">
      <div class="rtab"><svg class="rti" viewBox="0 0 12 18"><rect x=".5" y=".5" width="11" height="17" fill="#fff" stroke="#555"/><path d="M8 0h4v3z" fill="#555"/></svg><span>Project</span></div>
      <div class="rtab r2"><svg class="rti" viewBox="0 0 16 16"><rect x=".5" y="1" width="10" height="14" fill="#fff" stroke="#1976d2"/><path d="M3 4h5M5.500 4v8M3 12h5" stroke="#333"/><path d="M11 3h3v9h-3" fill="none" stroke="#999"/></svg><span>Activities</span></div>
      <div class="rtab r2"><svg class="rti" viewBox="0 0 16 16"><rect x=".5" y=".5" width="10" height="11" fill="#fff" stroke="#888"/><rect x="3" y="3" width="10" height="11" fill="none" stroke="#999"/><rect x="5" y="4.500" width="10" height="11" fill="none" stroke="#bbb"/></svg><span>Snippets</span></div>
    </aside>
    <div class="colL">
      <div class="panel locals">
        <div class="ph"><span>Locals</span><i class="dots"></i><svg class="ch8 dk"><use href="#chev"/></svg><svg class="pinic"><use href="#pin"/></svg></div>
        <div class="tbl"><div class="thead"><span class="th1">Name</span><span class="th2">Type</span><span>Value</span></div><div class="tbody"></div></div>
        <div class="ptabs"><span class="ptab on">Locals</span><span class="ptab">Watch</span><span class="ptab">Immediate</span></div>
      </div>
      <div class="panel output">
        <div class="ph"><span>Output</span><i class="dots"></i><svg class="ch8 dk"><use href="#chev"/></svg><svg class="pinic"><use href="#pin"/></svg></div>
        <div class="otool"><svg class="oclock" viewBox="0 0 16 16"><circle cx="8" cy="8" r="7" fill="none" stroke="#555" stroke-width="1.300"/><path d="M8 3v5l3 3" fill="none" stroke="#555"/></svg><svg class="omore" viewBox="0 0 8 8"><path d="M1 1h6M1 3.500l3 3 3-3" fill="none" stroke="#555"/></svg></div>
        <div class="osearch">Search</div>
        <div class="olist">
          <div class="msgs">
            <div class="msg"><svg class="mi"><use href="#warn"/></svg><p>Switch: The property 'Collection' of 'Add To<br>Collection' is not initialized.</p></div>
            <div class="msg"><svg class="mi"><use href="#warn"/></svg><p>Process: The property 'Collection' of 'Add To<br>Collection' is not initialized.</p></div>
            <div class="msg"><svg class="mi"><use href="#warn"/></svg><p>Add To Collection: The property 'Collection' of<br>'Add To Collection' is not initialized.</p></div>
            <div class="msg"><svg class="mi"><use href="#warn"/></svg><p>Invoke Process workflow: The property<br>'Collection' of 'Add To Collection' is not<br>initialized.</p></div>
            <div class="msg info"><svg class="mi" viewBox="0 0 10 10"><circle cx="5" cy="5" r="4" fill="none" stroke="#1976d2"/><path d="M5 3v4" stroke="#1976d2"/></svg><p>Consecutive system exception counter is 0.</p></div>
          </div>
          <div class="oscroll"><svg class="oc" viewBox="0 0 10 6"><path d="M1 5l4-4 4 4" fill="none" stroke="#777"/></svg><i class="othumb"></i><svg class="oc" viewBox="0 0 10 6"><path d="M1 1l4 4 4-4" fill="none" stroke="#777"/></svg></div>
        </div>
        <div class="ptabs"><span class="ptab on">Output</span><span class="ptab">Call Stack</span><span class="ptab">Breakpoints</span></div>
      </div>
      <div class="findref">Find References</div>
    </div>
    <div class="colC">
      <div class="doctabs">
        <span class="dt d0">s (ReadOnly)</span><span class="dt d1">SetTransactionStatus (ReadOnly)</span><span class="dt d2">CloseAllApplications (ReadOnly)</span>
        <span class="dt active">TakeScreenshot (ReadOnly)<svg class="dx" viewBox="0 0 12 12"><path d="M1 1l10 10M11 1 1 11" stroke="#fff"/></svg></span>
        <svg class="dmore" viewBox="0 0 10 12"><path d="M1 1h8M1 5l4 5 4-5" fill="none" stroke="#555"/></svg>
      </div>
      <div class="crumb2"><span>TakeScreenshot</span><span class="ca">Expand All</span><span class="cb">Collapse All</span></div>
      <div class="designer">
        <div class="canvas">
          <div class="act a-outer">
            <div class="ah"><svg class="afi"><use href="#flow"/></svg><span>Take and Save Screenshot</span><svg class="acl"><use href="#clockb"/></svg><svg class="aco"><use href="#coll"/></svg></div>
            <p class="adesc">Capture a screenshot, log its name and location and save it with the PNG extension.<br>If no specific filepath is passed as argument, it saves the image in the folder specified by<br>in_Folder.</p>
            <svg class="plus" viewBox="0 0 16 16"><circle cx="8" cy="8" r="7" fill="#fff" stroke="#999"/><path d="M8 4v8M4 8h8" stroke="#999"/></svg>
            <div class="act a-shot">
              <div class="ah"><svg class="afi" viewBox="0 0 18 18"><path d="M9 1v14M5 10l4 5 4-5" fill="none" stroke="#333" stroke-width="2"/><path d="M3 4h2M13 4h2M3 8h2M13 8h2" stroke="#6aa9e0" stroke-width="2"/></svg><span>Take screenshot</span><svg class="acl"><use href="#clockb"/></svg><svg class="aco"><use href="#coll"/></svg></div>
              <p class="shot-t">The whole screen is captured.</p>
              <a class="link shot-l">Indicate on screen</a>
            </div>
            <div class="arrow"><i></i><svg viewBox="0 0 10 10"><path d="M0 0h10L5 10z" fill="#8a8a8a"/></svg></div>
            <div class="act a-if">
              <div class="ah"><svg class="afi" viewBox="0 0 18 18"><path d="M9 1v16M2 5h14" stroke="#555" fill="none"/><path d="M0 11l2.500-6L5 11a2.500 2.500 0 0 1-5 0zM13 11l2.500-6 2.500 6a2.500 2.500 0 0 1-5 0z" fill="#777"/></svg><span>If no screenshot filepath</span><svg class="aco"><use href="#coll"/></svg></div>
              <div class="ifbody">
                <div>Condition</div>
                <div class="cond">String.IsNullOrEmpty(io_FilePath)</div>
                <a class="link showelse">Show Else</a>
                <div class="then">Then</div>
                <div class="thenbox"></div>
              </div>
            </div>
          </div>
        </div>
        <div class="vscroll"><b class="vb1"><svg viewBox="0 0 8 5"><path d="M0 5h8L4 0z" fill="#bbb"/></svg></b><b class="vth"></b><b class="vb1"><svg viewBox="0 0 8 5"><path d="M0 0h8L4 5z" fill="#bbb"/></svg></b></div>
      </div>
      <div class="dbottom">
        <span>Variables</span><span>Arguments</span><span>Imports</span>
        <div class="dzoom">
          <svg class="dz1" viewBox="0 0 16 18"><path d="M3 6v6l3 5h7l2-6V5h-2v3V3h-2v5V2H9v6V3H7v7L5 6z" fill="#333" stroke="#333"/></svg>
          <svg class="dz2" viewBox="0 0 16 16"><circle cx="10" cy="6" r="4.500" fill="none" stroke="#333" stroke-width="1.600"/><path d="M7 9.500 1.500 15" stroke="#333" stroke-width="2.500"/></svg>
          <span class="pct">100%</span>
          <svg class="dz3" viewBox="0 0 8 5"><path d="M0 0h8L4 5z" fill="#222"/></svg>
          <svg class="dz4" viewBox="0 0 16 16"><path d="M1 1h4M1 1v4M15 1h-4M15 1v4M1 15h4M1 15v-4M15 15h-4M15 15v-4" stroke="#333" stroke-width="1.600" fill="none"/><rect x="4" y="4" width="8" height="8" fill="none" stroke="#333"/></svg>
          <svg class="dz5" viewBox="0 0 16 18"><rect width="16" height="18" fill="#ddd" stroke="#aaa"/><path d="M8 3v3M8 12v3M3 9h3M10 9h3" stroke="#444" stroke-width="1.500"/></svg>
        </div>
      </div>
    </div>
    <div class="colR">
      <div class="panel tex">
        <div class="ph"><span>Test Explorer</span><i class="dots"></i><svg class="ch8 dk"><use href="#chev"/></svg><svg class="pinic"><use href="#pin"/></svg></div>
        <div class="ttool">
          <svg class="trun" viewBox="0 0 16 16"><path d="M1 1v14M4 1l11 7-11 7z" fill="none" stroke="#b5d3f0"/></svg><svg class="ch8 lt"><use href="#chev"/></svg>
          <span class="tb tb1"><span class="fw"><svg class="fl"><use href="#flask"/></svg><svg class="flb"><use href="#ok"/></svg></span>0</span>
          <span class="tb"><span class="fw"><svg class="fl"><use href="#flask"/></svg><svg class="flb"><use href="#err"/></svg></span>0</span>
          <span class="tb"><span class="fw"><svg class="fl"><use href="#flask"/></svg></span>7</span>
          <svg class="tmore" viewBox="0 0 8 8"><path d="M1 1h6M1 3.500l3 3 3-3" fill="none" stroke="#555"/></svg>
        </div>
        <div class="tsearch"><svg class="tsi" viewBox="0 0 16 16"><circle cx="10" cy="6" r="4.500" fill="none" stroke="#555" stroke-width="1.300"/><path d="M6.500 9.500 1.500 15" stroke="#555" stroke-width="2"/></svg><em>Search files (Ctrl+Alt+T)</em></div>
        <div class="tree">
          <div class="trows">
            <div class="tr0"><svg class="tc"><use href="#chev"/></svg><svg class="tf"><use href="#flow"/></svg>CloseAllApplications</div>
            <div class="tr1"><svg class="tfl"><use href="#flask"/></svg>InitAllApplicationsTestCase</div>
            <div class="tr1"><svg class="tfl"><use href="#flask"/></svg>ProcessTestCase</div>
            <div class="tr0"><svg class="tc"><use href="#chev"/></svg><svg class="tf"><use href="#flow"/></svg>GetTransactionData</div>
            <div class="tr1"><svg class="tfl"><use href="#flask"/></svg>GetTransactionDataTestCase</div>
            <div class="tr1"><svg class="tfl"><use href="#flask"/></svg>ProcessTestCase</div>
            <div class="tr0"><svg class="tc"><use href="#chev"/></svg><svg class="tf"><use href="#flow"/></svg>in_WorkflowFile</div>
            <div class="tr1 exp"><svg class="tcr"><use href="#chevr"/></svg><svg class="tfl"><use href="#flask"/></svg>GeneralTestCase (9)</div>
            <div class="tr0"><svg class="tc"><use href="#chev"/></svg><svg class="tf"><use href="#flow"/></svg>InitAllApplications</div>
            <div class="tr1"><svg class="tfl"><use href="#flask"/></svg>InitAllApplicationsTestCase</div>
            <div class="tr1"><svg class="tfl"><use href="#flask"/></svg>ProcessTestCase</div>
            <div class="tr0"><svg class="tc"><use href="#chev"/></svg><svg class="tf"><use href="#flow"/></svg>InitAllSettings</div>
            <div class="tr1"><svg class="tfl"><use href="#flask"/></svg>GetTransactionDataTestCase</div>
          </div>
          <div class="tscroll"><svg class="oc" viewBox="0 0 10 6"><path d="M1 5l4-4 4 4" fill="none" stroke="#777"/></svg><i class="tthumb"></i><svg class="oc" viewBox="0 0 10 6"><path d="M1 1l4 4 4-4" fill="none" stroke="#777"/></svg></div>
        </div>
        <div class="rtabs">
          <span class="rt on"><svg class="rtic" viewBox="0 0 16 16"><rect x="1" y="2" width="13" height="13" fill="none" stroke="#1976d2" stroke-width="1.500"/><path d="M4 8l3 4 8-11" fill="none" stroke="#1976d2" stroke-width="1.800"/></svg>Test Results</span>
          <span class="rt dimt"><svg class="rtic" viewBox="0 0 16 18"><rect x="2" y="2" width="12" height="15" fill="none" stroke="#888"/><rect x="5" y="0" width="6" height="3" fill="#aaa"/><path d="M6 6h1M9 6h1M6 9h1M9 9h1M6 12h1" stroke="#555"/></svg>Activity Co...</span>
          <span class="rt"><svg class="rtic" viewBox="0 0 16 16"><rect width="14" height="13" fill="#eee" stroke="#777"/><rect width="14" height="3" fill="#777"/><path d="M2 6h6M2 9h4" stroke="#777"/><circle cx="12" cy="11" r="4" fill="#1976d2"/></svg>Descriptor...</span>
        </div>
        <div class="summary">
          <h3>Test Summary</h3>
          <div class="sm s1"><svg class="fl"><use href="#flask"/></svg>Total: 15</div>
          <div class="sm"><span class="fw"><svg class="fl"><use href="#flask"/></svg><svg class="flb"><use href="#ok"/></svg></span>Passed: 0</div>
          <div class="sm"><span class="fw"><svg class="fl"><use href="#flask"/></svg><svg class="flb"><use href="#err"/></svg></span>Failed: 0</div>
        </div>
      </div>
    </div>
    <aside class="rail right">
      <div class="rtab"><svg class="rti" viewBox="0 0 16 18"><rect x="1" width="14" height="16" fill="#e6e6e6" stroke="#888"/><path d="M9 2h4v5H9z" fill="#777"/><circle cx="5" cy="14" r="3.500" fill="#e8672a"/><circle cx="9" cy="15" r="2.500" fill="#1976d2"/></svg><span>Object Repository</span></div>
      <div class="rtab rr2"><svg class="rti" viewBox="0 0 16 18"><path d="M1 2l3-1 2 3q2 1 3 3l6 8-2 2-7-7Q3 9 2 6z" fill="#666"/></svg><span>Properties</span></div>
      <div class="rtab rr3"><svg class="rti" viewBox="0 0 16 18"><path d="M1 2h2M13 0h2M6 2h4M1 6h14M3 9v8M8 9v8M13 9v6" stroke="#888" stroke-width="1.500" fill="none"/></svg><span>Outline</span></div>
    </aside>
  </div>
  <div class="st-status">
    <svg class="ss1" viewBox="0 0 10 16"><rect width="10" height="16" fill="#eda36a"/><circle cx="5" cy="8" r="2.500" fill="none" stroke="#c95d00"/></svg><svg class="ch6 wh s1g"><use href="#chev"/></svg>
    <i class="sdot"></i><span>Andy_KGiSL_Workspace</span><svg class="ch6 wh"><use href="#chev"/></svg>
    <svg class="ss2" viewBox="0 0 14 14"><path d="M7 0v14M0 7h14" stroke="#eda36a" stroke-width="3"/></svg><span>Add To Source Control</span><svg class="ch6 wh"><use href="#chev"/></svg>
    <span class="lang">VB, Windows - Legacy</span>
  </div>
</div>
<footer class="taskbar">
  <div class="weather"><svg class="wcloud" viewBox="0 0 24 18"><path d="M5 17q-5-1-4-6 1-3 4-3 1-6 7-6 5 0 6 5 5 0 5 5t-5 5z" fill="#bcd7f2" stroke="#a3c4ea"/></svg><div><div>85°F</div><div class="wsub">Cloudy</div></div></div>
  <div class="apps">
    <span class="app"><svg class="ai"><use href="#t-start"/></svg></span>
    <span class="app"><svg class="ai"><use href="#t-search"/></svg></span>
    <span class="app"><svg class="ai"><use href="#t-task"/></svg></span>
    <span class="app"><svg class="ai"><use href="#t-chat"/></svg></span>
    <span class="app run"><svg class="ai"><use href="#t-files"/></svg></span>
    <span class="app run"><svg class="ai"><use href="#t-edge"/></svg></span>
    <span class="app run"><svg class="ai"><use href="#t-mail"/></svg></span>
    <span class="app"><svg class="ai"><use href="#t-store"/></svg></span>
    <span class="app active"><svg class="ai"><use href="#t-ui"/></svg></span>
    <span class="app run"><svg class="ai"><use href="#t-chrome"/></svg></span>
    <span class="app run"><svg class="ai"><use href="#t-teams"/></svg></span>
    <span class="app run"><svg class="ai"><use href="#t-green"/></svg></span>
  </div>
  <div class="tray only"><div class="clock"><div>11:00 AM</div><div>10/25/2022</div></div></div>
</footer>
</section>
</body>
</html>
```
FILE: styles.css
```
* { box-sizing: border-box; }
html, body { margin: 0; padding: 0; }
body { width: 2732px; height: 768px; overflow: hidden; display: flex; font: 12px/15px Roboto, "Liberation Sans", sans-serif; color: #1a1a1a; background: #fff; }
p, h2, h3 { margin: 0; font-weight: 400; }
.defs { position: absolute; width: 0; height: 0; overflow: hidden; }
.pdft { font: 500 24px Roboto, sans-serif; letter-spacing: 3px; fill: #fff; }
.hq { font: 11px Roboto, sans-serif; fill: #fff; }
.offt { font: 700 5.500px Roboto, sans-serif; fill: #fff; }
svg { display: block; flex: none; }
.screen { width: 1366px; height: 768px; display: flex; flex-direction: column; flex: none; }

/* Explorer */
.explorer { height: 720px; display: flex; flex-direction: column; background: #fff; }
.ex-title { height: 33px; background: #f3f3f3; display: flex; align-items: center; padding-left: 5px; gap: 6px; color: #8a8a8a; }
.ic14 { width: 14px; height: 18px; }
.ex-tools { height: 44px; background: #f3f3f3; border-bottom: 2px solid #e2e2e2; display: flex; align-items: center; padding-left: 11px; padding-bottom: 4px; }
.ic18 { width: 18px; height: 22px; }
.tool { width: 48px; height: 24px; display: flex; justify-content: center; align-items: center; color: #333; }
.tool-new { width: 78px; justify-content: flex-start; padding-left: 9px; gap: 8px; }
.ch8 { width: 8px; height: 5px; color: #888; }
.tsep { width: 1px; height: 42px; background: #e4e4e4; }
.s-a { margin-left: 9px; margin-right: 3px; }
.s-b { margin-left: 2px; }
.tool-txt { width: 88px; gap: 7px; justify-content: flex-start; padding-left: 16px; }
.tool-view { width: 80px; gap: 7px; justify-content: flex-start; margin-left: 15px; }
.tool .ch8 { margin-left: 1px; }
.tool-dots { margin-left: 15px; font-size: 9px; letter-spacing: 1px; color: #222; }
.ex-addr { height: 55px; display: flex; align-items: center; padding: 0 17px 0 14px; }
.navs { width: 123px; display: flex; align-items: center; gap: 21px; flex: none; }
.navs .ic14 { height: 14px; }
.navs svg:nth-child(3) { margin-left: -2px; }
.crumbs { width: 999px; height: 34px; border: 1.500px solid #e2e2e2; display: flex; align-items: center; padding-left: 10px; color: #333; margin-right: 17px; flex: none; }
.cr { width: 5px; height: 9px; margin: 0 7px; color: #777; }
.crumbs span { margin-right: 3px; }
.cr-ch { width: 8px; height: 5px; margin-left: auto; color: #666; margin-right: 20px; }
.cr-re { width: 14px; height: 14px; margin-right: 8px; }
.exsearch { flex: 1; height: 34px; border: 1.500px solid #e2e2e2; display: flex; align-items: center; padding-left: 9px; gap: 16px; color: #666; }
.exsearch .ic14 { height: 14px; }
.ex-main { flex: 1; display: flex; min-height: 0; }
.nav { width: 158px; flex: none; border-right: 1px solid #f0f0f0; padding-top: 10px; overflow: hidden; }
.nrow { height: 32px; display: flex; align-items: center; padding-left: 11px; color: #222; white-space: nowrap; }
.nrow.gap { margin-top: 8px; }
.nrow.sub { padding-left: 19px; }
.nch { width: 6px; height: 10px; color: #888; margin-right: 12px; }
.nch.down { width: 10px; height: 6px; margin: 0 10px 0 -2px; }
.nic { width: 16px; height: 16px; margin-right: 5px; }
.nrow.sub .nic { margin-right: 6px; }
.clip { overflow: hidden; width: 105px; }
.cur { height: 28px; margin: 2px 2px; padding-left: 17px !important; background: #dedede; border-radius: 2px; }
.files { width: 1192px; flex: none; padding: 6px 8px 0 8px; overflow: hidden; height: 564px; }
.group { margin-bottom: 3px; }
.group.first { margin-bottom: 4px; }
.ghead { height: 24px; display: flex; align-items: center; font-size: 15.500px; color: #1c3c9e; white-space: nowrap; }
.gch { width: 11px; height: 7px; color: #888; margin: 0 4px 0 0; }
.ghead span { margin-right: 8px; }
.ghead i { flex: 1; height: 1px; background: #e5e5e5; }
.tiles { display: flex; margin-top: 4px; padding-left: 8px; }
.tile { width: 106px; min-height: 116px; padding: 7px 0 3px; text-align: center; flex: none; }
.tile p { margin-top: 7px; white-space: nowrap; color: #111; }
.sel { background: #d9d9d9; width: 105px; margin-right: 1px; }
.ticon { width: 84px; height: 84px; margin: 0 auto; }
.ticon.wide { width: 92px; }
.peek { margin-top: 11px; padding-left: 8px; display: flex; align-items: flex-start; }
.pk-blue { width: 55px; height: 8px; margin-left: 19px; margin-right: 45px; background: #0e6fbf; border-radius: 4px 4px 0 0; flex: none; }
.pk-line { width: 25px; height: 1px; background: #bbb; margin: 5px 81px 0 0; flex: none; }
.ex-scroll { width: 16px; flex: none; background: #f3f4f4; padding: 0 0 0 6px; }
.ex-scroll i { display: block; width: 3px; height: 442px; background: #868686; border-radius: 2px; }
.ex-status { height: 24px; display: flex; align-items: center; padding-left: 14px; color: #444; }
.ex-status > i { width: 1px; height: 15px; background: #eee; margin: 0 10px; }
.viewbtns { margin-left: auto; display: flex; align-items: center; gap: 4px; margin-right: 4px; }
.vb { width: 14px; height: 14px; }
.vb-on { width: 22px; height: 23px; border: 1px solid #4da3dd; background: #e5f3fb; display: flex; align-items: center; justify-content: center; }

/* Taskbar */
.taskbar { height: 48px; display: flex; align-items: center; position: relative; background: linear-gradient(90deg, #dfedf7 0, #dbe8f6 30%, #d4dff2 60%, #dde8f6 80%, #e4eff8 100%); border-top: 1px solid #d8e0ea; color: #555; }
.weather { width: 200px; display: flex; align-items: center; padding-left: 20px; gap: 7px; line-height: 16px; flex: none; color: #333; }
.wsub { color: #666; }
.wcloud { width: 24px; height: 18px; }
.apps { display: flex; margin-left: 220px; flex: none; }
.app { width: 44.200px; height: 38px; display: flex; justify-content: center; align-items: center; position: relative; }
.ai { width: 24px; height: 24px; }
.run::after { content: ""; position: absolute; left: 19px; bottom: 1px; width: 6px; height: 3px; border-radius: 2px; background: #7a808a; }
.active::before { content: ""; position: absolute; left: 3px; top: 0; width: 38px; height: 38px; border-radius: 4px; background: rgba(255,255,255,.6); box-shadow: 0 0 1px #b5b5c5; }
.active .ai { position: relative; }
.active::after { content: ""; position: absolute; left: 14px; bottom: 1px; width: 16px; height: 3px; border-radius: 2px; background: #0f6cd8; }
.tray { margin-left: auto; display: flex; align-items: center; padding-right: 20px; color: #333; }
.tray.only { padding-right: 10px; color: #555; }
.tr { width: 16px; height: 16px; margin-right: 8px; }
.tr-up { width: 12px; height: 10px; margin-right: 6px; }
.eng { margin: 0 18px 0 5px; color: #333; }
.clock { text-align: right; line-height: 16px; margin-left: 6px; }
.badge { width: 16px; height: 18px; border-radius: 50%; background: #0f6cd8; color: #fff; font-weight: 700; text-align: center; line-height: 18px; margin-left: 8px; }

/* Studio */
.studio { height: 720px; display: flex; flex-direction: column; background: #f5f6f6; }
.st-title { height: 30px; background: #1976d2; color: #fff; display: flex; align-items: stretch; padding-left: 17px; flex: none; }
.st-tab { font-size: 13.500px; line-height: 33px; margin-right: 30px; }
.st-tab.on { background: #fff; color: #1976d2; margin: 0 0 0 -16px; width: 67px; text-align: center; }
.st-name { margin-left: 392px; font-size: 13px; line-height: 32px; width: 162px; white-space: nowrap; }
.st-ctl { margin-left: auto; display: flex; align-items: center; padding-right: 9px; }
.c-s { width: 18px; height: 18px; margin-right: 14px; }
.c-f { width: 18px; height: 18px; margin-right: 13px; }
.c-h { width: 26px; height: 18px; margin-right: 7px; }
.avatar { width: 23px; height: 24px; border-radius: 50%; background: #fff; color: #222; text-align: center; line-height: 24px; margin-right: 22px; }
.c-m, .c-r, .c-x { width: 11px; height: 11px; }
.c-m { margin-right: 33px; }
.c-r { margin-right: 33px; }
.ribbon { height: 76px; background: #fbfbfb; border-bottom: 1px solid #e2e2e2; display: flex; padding: 4px 0 0 10px; flex: none; position: relative; }
.rb { display: flex; flex-direction: column; align-items: center; padding-top: 4px; text-align: center; line-height: 13px; height: 71px; color: #222; flex: none; }
.rb > span { margin-top: 9px; display: block; white-space: nowrap; }
.rb > span .ch8 { display: inline-block; margin-top: 3px; }
.ri { width: 24px; height: 24px; }
.w50 { width: 50px; } .w48 { width: 48px; } .w95 { width: 95px; } .w58 { width: 58px; } .w69 { width: 69px; } .w61 { width: 61px; } .w41 { width: 41px; } .w63 { width: 63px; } .w59 { width: 59px; } .w72 { width: 72px; } .w65 { width: 65px; } .w55 { width: 55px; }
.rsep { width: 1px; height: 69px; background: #dcdcdc; flex: none; }
.rsep.m8 { margin-left: 8px; }
.rcol { display: flex; flex-direction: column; flex: none; padding-top: 1px; }
.rs, .rs2, .rs3 { height: 24px; display: flex; align-items: center; color: #222; }
.rs { padding-left: 14px; }
.rsi { width: 14px; height: 18px; margin-right: 4px; }
.rs2 .rsi2 { width: 16px; height: 16px; margin-right: 4px; }
.rs3 { padding-left: 4px; }
.rsi3 { width: 16px; height: 10px; margin-right: 7px; }
.rs.off, .rs2.off, .rs3.off, .off { color: #9c9c9c; }
.hl { background: #ccced1; }
.up1 { margin-top: 8px !important; }
.ch6 { width: 7px; height: 5px; display: inline-block; color: #666; }
.rcollapse { position: absolute; right: 0; bottom: 5px; width: 10px; height: 6px; }
.st-body { flex: 1; display: flex; padding-top: 6px; min-height: 0; }
.rail { width: 33px; flex: none; display: flex; flex-direction: column; align-items: center; }
.rail.right { width: 26px; padding-left: 8px; }
.rtab { display: flex; flex-direction: column; align-items: center; color: #333; }
.rtab span { writing-mode: vertical-rl; margin-top: 3px; }
.rti { width: 16px; height: 18px; }
.r2 { margin-top: 13px; }
.rr2 { margin-top: 11px; }
.rr3 { margin-top: 12px; }
.colL { width: 298px; margin-right: 8px; flex: none; display: flex; flex-direction: column; }
.panel { border: 1px solid #e3e5e5; background: #f5f6f6; display: flex; flex-direction: column; }
.locals { height: 273px; }
.output { height: 272px; margin-top: 7px; }
.ph { height: 23px; flex: none; display: flex; align-items: center; padding: 0 7px 0 6px; gap: 8px; color: #222; }
.dots { flex: 1; height: 6px; background-image: radial-gradient(#aaa .7px, transparent .8px); background-size: 2.500px 3px; }
.pinic { width: 10px; height: 14px; margin-left: 6px; }
.tbl { flex: 1; border: 2px solid #e6e6e6; border-width: 0 2px 2px 2px; background: #fff; display: flex; flex-direction: column; min-height: 0; }
.thead { height: 20px; display: flex; align-items: center; background: #f7f7f7; border-top: 2px solid #e6e6e6; border-bottom: 2px solid #e3e3e3; padding-left: 7px; color: #444; }
.thead span { height: 100%; display: flex; align-items: center; }
.th1 { width: 81px; border-right: 1px solid #ddd; }
.th2 { width: 73px; border-right: 1px solid #ddd; padding-left: 7px; }
.thead span:last-child { padding-left: 8px; }
.tbody { flex: 1; }
.ptabs { height: 20px; flex: none; display: flex; align-items: center; color: #444; }
.ptab { padding: 0 6px; line-height: 20px; }
.ptab.on { background: #fff; color: #1976d2; }
.otool { height: 29px; flex: none; position: relative; padding: 7px 0 0 13px; }
.oclock { width: 16px; height: 16px; }
.omore { width: 7px; height: 8px; position: absolute; right: 2px; bottom: 1px; }
.osearch { height: 24px; flex: none; background: #fff; border: 1px solid #e2e2e2; border-width: 2px 1px; line-height: 20px; padding-left: 4px; color: #999; }
.olist { flex: 1; background: #fff; display: flex; min-height: 0; overflow: hidden; }
.msgs { flex: 1; padding-top: 3px; }
.msg { display: flex; color: #e8113a; margin-bottom: 4px; padding-left: 7px; }
.msg.info { color: #222; }
.mi { width: 10px; height: 10px; margin: 3px 4px 0 0; }
.msg p { white-space: nowrap; }
.oscroll { width: 15px; margin-right: 3px; flex: none; display: flex; flex-direction: column; align-items: center; background: #fcfcfc; padding: 7px 0 5px; }
.oc { width: 10px; height: 6px; }
.othumb { width: 11px; height: 14px; background: #e6e6e6; margin-top: auto; margin-bottom: 5px; }
.findref { margin-top: 9px; line-height: 15px; color: #444; margin-left: -1px; }
.colC { width: 693px; margin-right: 7px; flex: none; display: flex; flex-direction: column; height: 552px; }
.doctabs { height: 25px; flex: none; display: flex; border-bottom: 2px solid #1976d2; white-space: nowrap; line-height: 25px; color: #222; }
.dt { flex: none; }
.d0 { width: 98px; }
.d1 { width: 202px; }
.d2 { width: 199px; }
.active.dt { width: 177px; background: #1976d2; color: #fff; padding-left: 6px; display: flex; align-items: center; }
.dx { width: 10px; height: 10px; margin-left: 10px; }
.dmore { width: 10px; height: 12px; margin: 5px 0 0 4px; }
.crumb2 { height: 28px; flex: none; background: #fff; display: flex; align-items: center; padding-left: 6px; border-bottom: 1px solid #dcdcdc; color: #222; }
.ca { margin-left: auto; }
.cb { margin: 0 6px 0 10px; }
.designer { height: 472px; flex: none; display: flex; }
.canvas { flex: 1; background: #fff; overflow: hidden; padding: 30px 0 0 74px; }
.act { border: 1.500px solid #d8d9d9; background: #fff; border-radius: 2px; }
.a-outer { width: 527px; height: 460px; border-bottom: 0; }
.ah { height: 21px; background: #f5f6f6; border-bottom: 1.500px solid #dcdcdc; display: flex; align-items: center; padding-left: 1px; color: #222; }
.afi { width: 17px; height: 19px; margin-right: 6px; }
.ah span { white-space: nowrap; }
.acl { width: 16px; height: 17px; margin-left: auto; }
.aco { width: 11px; height: 12px; margin: 0 5px 0 16px; }
.a-if .aco { margin-left: auto; }
.adesc { padding: 7px 0 0 20px; white-space: nowrap; color: #222; }
.plus { width: 15px; height: 15px; margin: 20px 0 0 253px; }
.a-shot { width: 335px; height: 117px; margin: 5px 0 0 94px; }
.shot-t { padding: 7px 0 0 21px; }
.link { color: #1976d2; display: block; }
.shot-l { margin: 24px 0 0 117px; }
.arrow { margin-left: 257px; width: 9px; height: 41px; display: flex; flex-direction: column; align-items: center; }
.arrow i { width: 2px; flex: 1; background: #8a8a8a; }
.arrow svg { width: 9px; height: 9px; }
.a-if { width: 485px; height: 300px; margin-left: 20px; }
.ifbody { padding: 12px 15px 0; color: #222; }
.cond { height: 22px; border: 2px solid #dfdfdf; line-height: 18px; padding-left: 4px; margin-top: 4px; }
.showelse { margin: 10px 0 0 6px; }
.then { text-align: center; margin-top: 14px; }
.thenbox { height: 80px; border: 1.500px solid #dfdfdf; border-radius: 2px; margin-top: 9px; }
.vscroll { width: 18px; flex: none; background: #f3f4f4; padding: 1px; display: flex; flex-direction: column; gap: 2px; }
.vb1 { height: 15px; border: 1px solid #c9c9c9; background: #fff; display: flex; align-items: center; justify-content: center; flex: none; }
.vb1 svg { width: 8px; height: 5px; }
.vth { height: 163px; background: #fff; border: 1px solid #c9c9c9; }
.vb1:last-child { margin-top: auto; margin-bottom: 2px; }
.dbottom { flex: 1; display: flex; align-items: center; padding: 0 0 0 5px; gap: 16px; color: #333; margin-top: 5px; border-bottom: 1px solid #e2e3e3; white-space: nowrap; }
.dzoom { margin-left: auto; display: flex; align-items: center; }
.dz1 { width: 15px; height: 18px; margin-right: 12px; }
.dz2 { width: 15px; height: 15px; margin-right: 14px; }
.pct { width: 48px; }
.dz3 { width: 7px; height: 4px; margin-right: 18px; }
.dz4 { width: 16px; height: 16px; margin-right: 11px; }
.dz5 { width: 16px; height: 20px; margin-right: 6px; }
.colR { width: 301px; flex: none; height: 552px; }
.tex { height: 100%; background: #f5f6f6; }
.ttool { height: 32px; flex: none; display: flex; align-items: center; padding: 0 0 0 11px; position: relative; border-bottom: 1px solid #e2e2e2; }
.trun { width: 16px; height: 16px; }
.lt { color: #ccc; margin: 0 9px 0 6px; }
.tb { width: 32px; height: 23px; background: #dedede; display: flex; align-items: center; padding-left: 5px; margin-right: 8px; gap: 2px; color: #444; }
.fw { width: 16px; height: 18px; position: relative; display: block; }
.fl { width: 14px; height: 16px; }
.flb { position: absolute; right: 0; bottom: 0; width: 9px; height: 9px; }
.tmore { position: absolute; right: 6px; bottom: 4px; width: 7px; height: 8px; }
.tsearch { height: 23px; flex: none; background: #fff; border-bottom: 1px solid #e2e2e2; display: flex; align-items: center; padding-left: 3px; color: #777; }
.tsi { width: 16px; height: 16px; margin-right: 7px; }
.tree { height: 312px; flex: none; background: #fff; display: flex; overflow: hidden; }
.trows { flex: 1; color: #222; }
.tr0, .tr1 { height: 24px; display: flex; align-items: center; white-space: nowrap; position: relative; }
.tr0 { padding-left: 8px; }
.tc { width: 8px; height: 5px; color: #333; margin-right: 8px; }
.tf { width: 17px; height: 20px; margin-right: 6px; }
.tr1 { padding-left: 46px; }
.tfl { width: 15px; height: 17px; margin-right: 6px; }
.tcr { position: absolute; left: 28px; width: 5px; height: 9px; color: #333; }
.tscroll { width: 16px; margin-right: 2px; flex: none; background: #fcfcfc; display: flex; flex-direction: column; align-items: center; padding: 7px 0 4px; }
.tthumb { width: 11px; height: 114px; background: #e9e9e9; margin: 2px 0 auto; }
.rtabs { height: 24px; flex: none; display: flex; background: #ececec; border-top: 3px solid #e6e6e6; padding-left: 1px; white-space: nowrap; }
.rt { width: 102px; display: flex; align-items: center; padding-left: 6px; color: #222; gap: 6px; border-right: 1px solid #f6f6f6; }
.rt.on { width: 93px; background: #f6f6f6; color: #1976d2; }
.rt.dimt { color: #888; }
.rtic { width: 15px; height: 16px; }
.summary { flex: 1; background: #fff; border: 1px solid #e2e2e2; border-width: 0 1px 1px; padding: 11px 0 0 10px; }
.summary h3 { font-size: 14.500px; line-height: 20px; color: #222; margin-bottom: 3px; }
.sm { height: 20px; display: flex; align-items: center; padding-left: 5px; gap: 4px; color: #222; }
.st-status { height: 24px; flex: none; background: #c95d00; color: #fbeee2; display: flex; align-items: center; padding-left: 840px; white-space: nowrap; }
.wh { color: #fbeee2; margin-left: 4px; }
.ss1 { width: 10px; height: 16px; }
.s1g { margin-right: 21px; }
.sdot { width: 8px; height: 8px; border-radius: 50%; background: #a45a1c; margin-right: 5px; }
.ss2 { width: 14px; height: 14px; margin: 0 4px 0 42px; }
.lang { margin-left: 18px; }
```
